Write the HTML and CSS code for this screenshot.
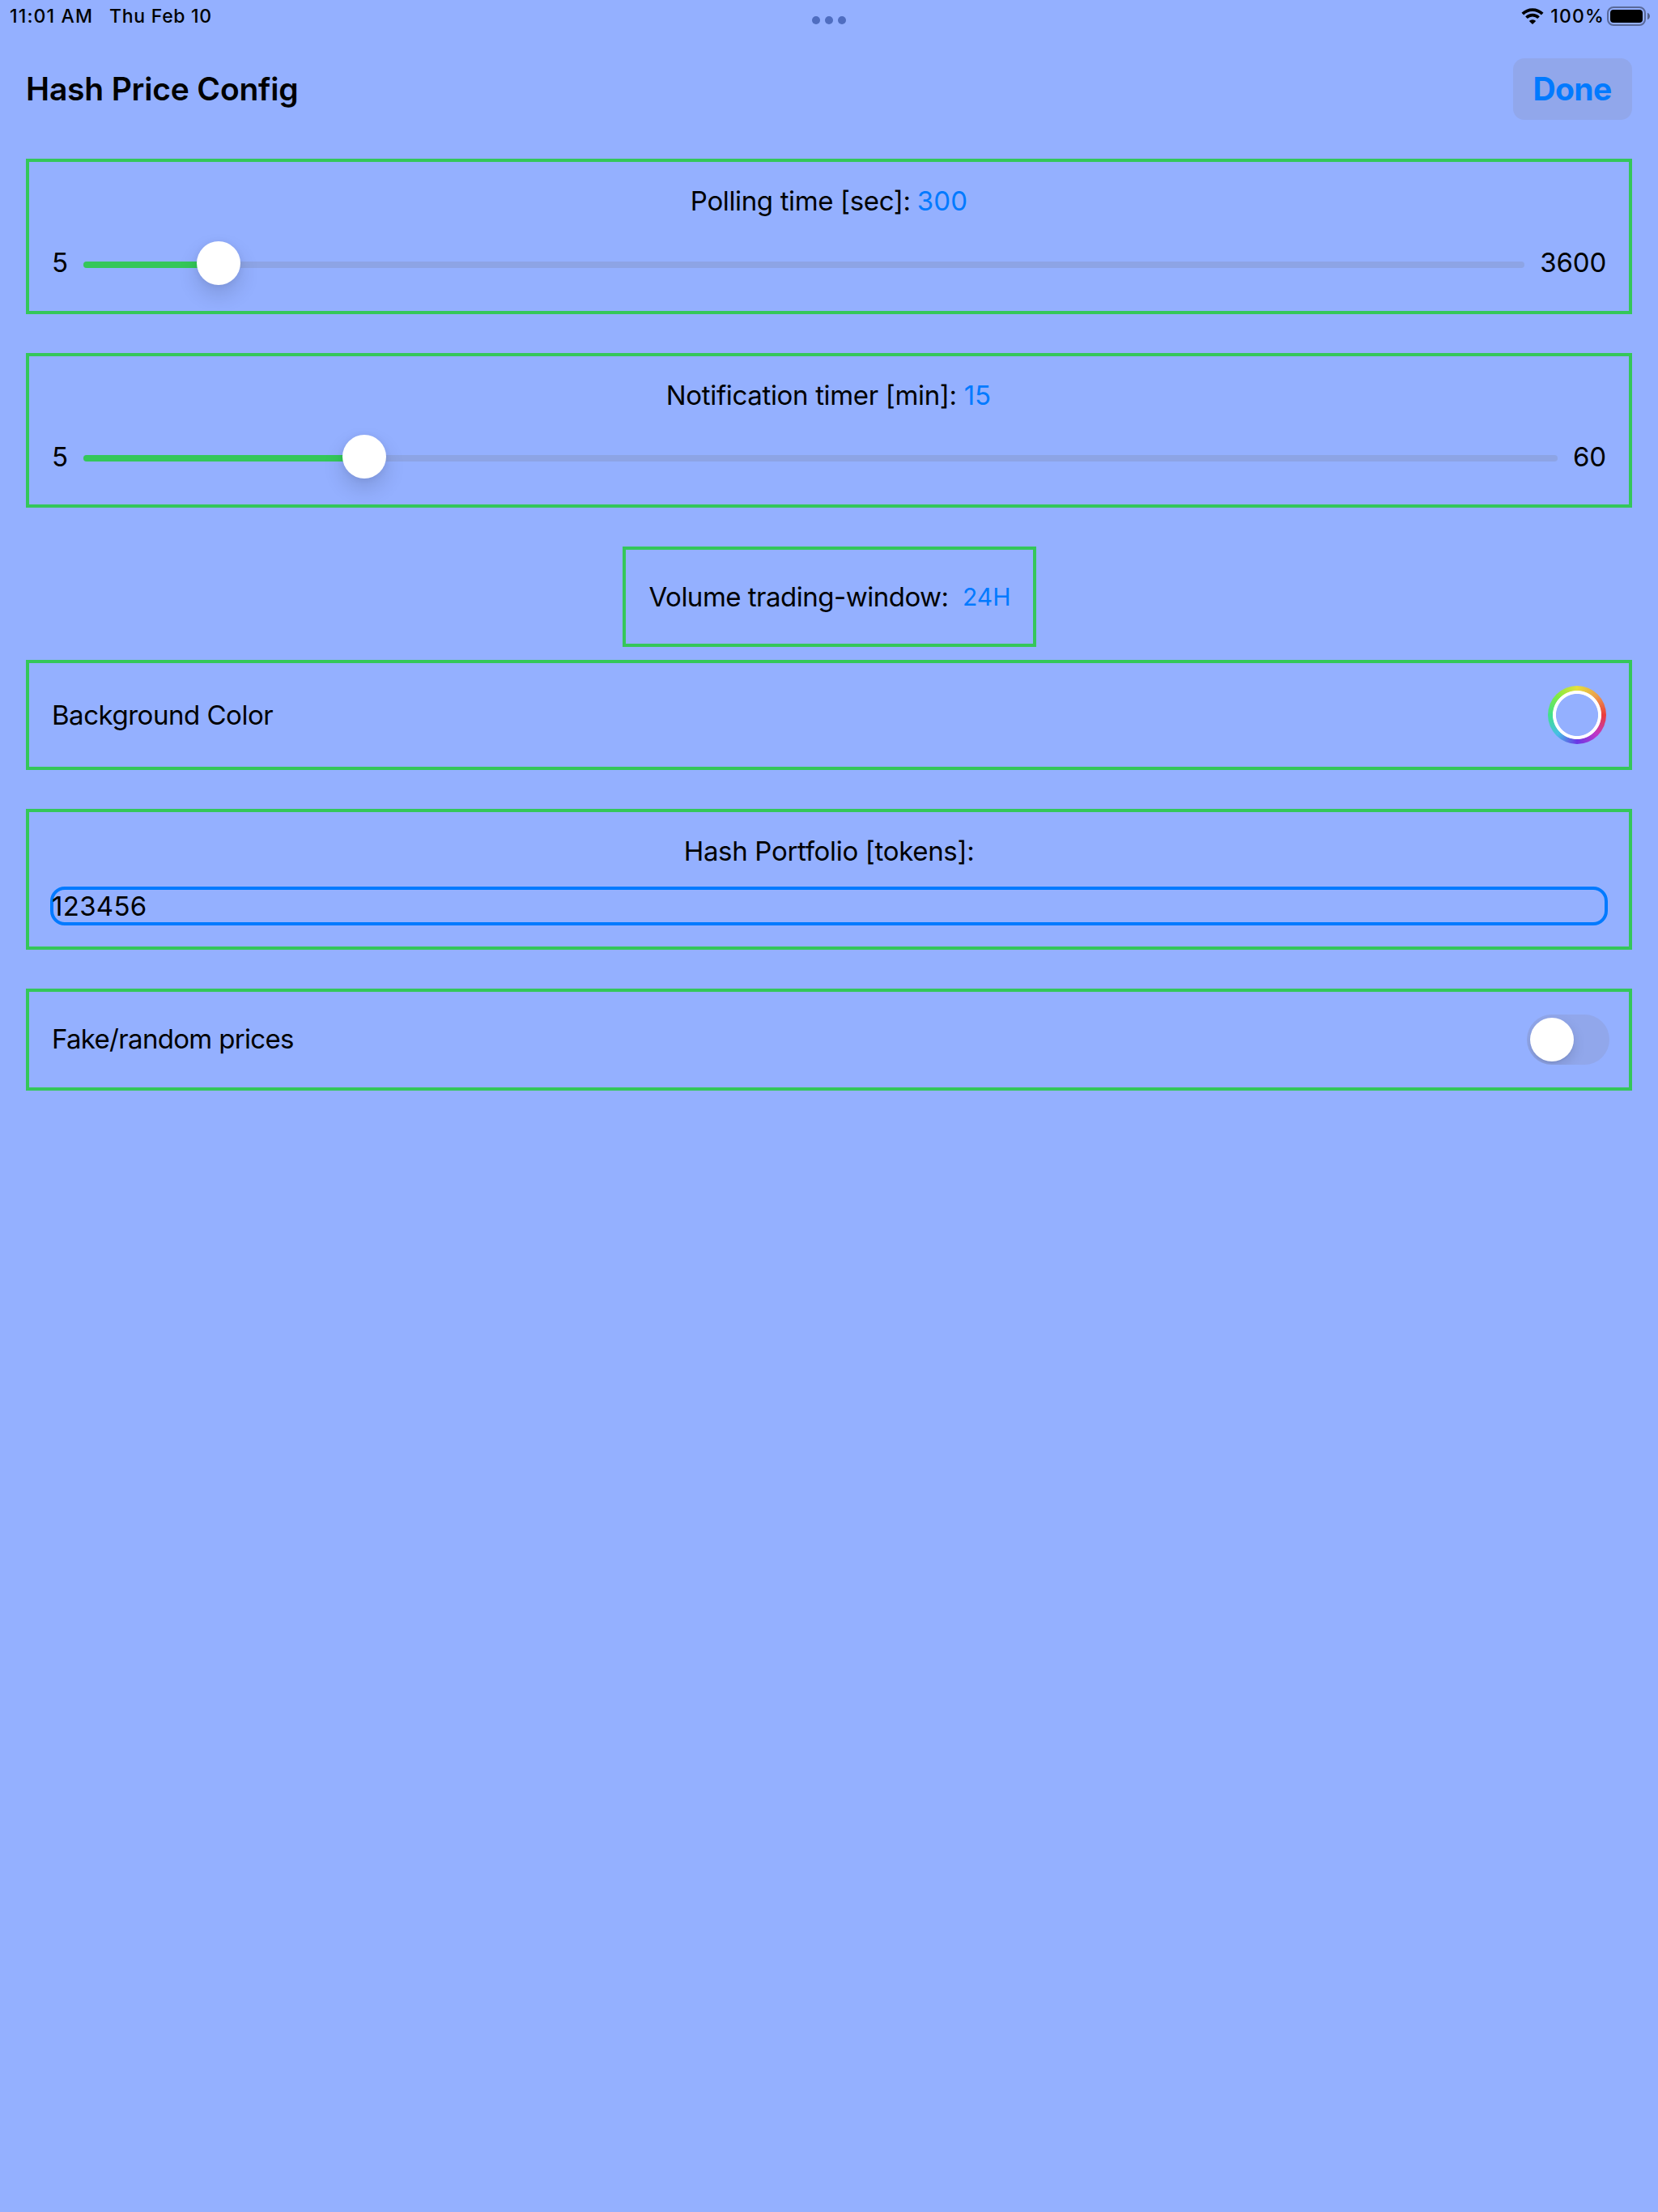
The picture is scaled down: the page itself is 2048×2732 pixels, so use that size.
FILE: index.html
```
<!DOCTYPE html>
<html lang="en">
<head>
<meta charset="utf-8">
<title>Hash Price Config</title>
<link rel="stylesheet" href="styles.css">
</head>
<body>
<div class="statusbar">
  <div class="status-left">
    <span class="time">11:01 AM</span>
    <span class="date">Thu Feb 10</span>
  </div>
  <div class="multitask"><i></i><i></i><i></i></div>
  <div class="status-right">
    <svg class="wifi" viewBox="0 0 28 20" width="28" height="20">
      <path d="M1.8 7.1A17.25 17.25 0 0 1 26.2 7.1" fill="none" stroke="#000" stroke-width="3.8"/>
      <path d="M6.5 11.8A10.6 10.6 0 0 1 21.5 11.8" fill="none" stroke="#000" stroke-width="3.7"/>
      <path d="M14 20L9.8 15.9A6 6 0 0 1 18.2 15.9Z" fill="#000"/>
    </svg>
    <span class="percent">100%</span>
    <svg class="battery" viewBox="0 0 53 24" width="53" height="24">
      <rect x="1" y="1" width="46" height="22" rx="7" fill="none" stroke="#000" stroke-opacity=".4" stroke-width="2"/>
      <rect x="4" y="4" width="40" height="16" rx="4" fill="#000"/>
      <path d="M50 7.8C52 8.6 53 10.2 53 12S52 15.4 50 16.2Z" fill="#000" fill-opacity=".45"/>
    </svg>
  </div>
</div>

<header class="header">
  <h1 class="title">Hash Price Config</h1>
  <button class="done" type="button">Done</button>
</header>

<main class="settings">
  <section class="card polling">
    <div class="caption"><span class="label">Polling time [sec]:</span><span class="value">300</span></div>
    <div class="slider-row">
      <span>5</span>
      <div class="slider"><div class="track"></div><div class="fill" style="width:167px"></div><div class="knob" style="left:140px"></div></div>
      <span class="max">3600</span>
    </div>
  </section>

  <section class="card notify">
    <div class="caption"><span class="label">Notification timer [min]:</span><span class="value">15</span></div>
    <div class="slider-row">
      <span>5</span>
      <div class="slider"><div class="track"></div><div class="fill" style="width:347px"></div><div class="knob" style="left:320px"></div></div>
      <span class="max">60</span>
    </div>
  </section>

  <section class="card window">
    <span class="label">Volume trading-window:</span><span class="picker">24H</span>
  </section>

  <section class="card background">
    <span class="label">Background Color</span>
    <div class="colorwell"></div>
  </section>

  <section class="card portfolio">
    <div class="caption"><span class="label">Hash Portfolio [tokens]:</span></div>
    <div class="field"><span>123456</span></div>
  </section>

  <section class="card fake">
    <span class="label">Fake/random prices</span>
    <div class="switch"><div class="switch-knob"></div></div>
  </section>
</main>
</body>
</html>
```
FILE: styles.css
```
* { box-sizing: border-box; }

body {
  margin: 0;
  min-height: 2732px;
  background: #94b0ff;
  color: #000;
  font: 400 33px/40px Inter, "Liberation Sans", sans-serif;
  white-space: nowrap;
}

/* status bar */
.statusbar {
  display: grid;
  grid-template-columns: 1fr auto 1fr;
  height: 72px;
  padding: 0 10px 0 12px;
  font-size: 23px;
  font-weight: 500;
  line-height: 41px;
}
.status-left { display: flex; gap: 20px; }
.time { letter-spacing: 1.15px; }
.date { letter-spacing: .7px; }
.multitask { display: flex; gap: 6px; padding: 20px 2px 0 0; }
.multitask i { width: 10px; height: 10px; border-radius: 50%; background: #4f6dc0; }
.status-right { display: flex; justify-content: flex-end; align-items: flex-start; }
.wifi { margin: 10px 8px 0 0; }
.percent { letter-spacing: 1.15px; margin-right: 3px; }
.battery { margin-top: 8px; }

/* header */
.header {
  display: flex;
  justify-content: space-between;
  align-items: center;
  height: 76px;
  padding: 0 32px;
}
.title { margin: 0; font-size: 39px; font-weight: 600; letter-spacing: -.19px; }
.done {
  width: 147px;
  height: 76px;
  padding: 0 1px 0 0;
  border: 0;
  border-radius: 14px;
  background: #91a7eb;
  color: #007aff;
  font: 700 39px/40px Inter, "Liberation Sans", sans-serif;
  letter-spacing: -.62px;
}

/* cards */
.settings { display: flex; flex-direction: column; padding: 48px 32px 0; }
.card { border: 4px solid #34c759; padding: 28px; margin-bottom: 48px; }
.caption { display: flex; justify-content: center; }
.value { color: #007aff; }

.polling { height: 192px; }
.polling .label { letter-spacing: -.36px; }
.polling .caption { gap: 8px; }
.polling .value { letter-spacing: .15px; }
.polling .slider { top: 1px; }
.notify { height: 191px; }
.notify .label { letter-spacing: -.34px; }
.notify .caption { gap: 9px; padding-right: 1px; }

.slider-row { display: flex; align-items: center; gap: 19px; height: 54px; margin-top: 29px; }
.slider { position: relative; flex: 1; height: 54px; }
.max { letter-spacing: -.2px; }
.track, .fill { position: absolute; left: 0; top: 25px; height: 8px; border-radius: 4px; }
.track { width: 100%; background: #8da4e5; }
.fill { background: #34c759; }
.knob {
  position: absolute;
  top: 0;
  width: 54px;
  height: 54px;
  border-radius: 50%;
  background: #fff;
  box-shadow: 0 12px 26px rgba(0, 0, 0, .14), 0 1px 8px rgba(0, 0, 0, .06);
}

.window {
  display: flex;
  justify-content: space-between;
  align-items: center;
  align-self: center;
  width: 511px;
  height: 124px;
  margin-bottom: 16px;
  padding: 28px 27px 28px 29px;
}
.window .label { letter-spacing: -.5px; }
.picker { color: #007aff; font-size: 30px; }

.background { display: flex; justify-content: space-between; align-items: center; height: 136px; }
.background .label { letter-spacing: -.48px; }
.colorwell {
  width: 72px;
  height: 72px;
  border-radius: 50%;
  background:
    radial-gradient(circle, #94b0ff 25.6px, #fff 26.4px, #fff 29.6px, transparent 30.4px),
    conic-gradient(#e6e03c, #eba04b 45deg, #eb3c3c 90deg, #be37c8 135deg, #6937e6 180deg, #46bee6 225deg, #41e18c 270deg, #82eb41 315deg, #e6e03c);
}

.portfolio { height: 174px; }
.portfolio .label { letter-spacing: -.32px; }
.field {
  display: flex;
  align-items: center;
  height: 48px;
  margin: 24px -2px 0;
  border: 4px solid #007aff;
  border-radius: 18px;
}
.field span { margin-left: -2px; letter-spacing: .3px; }

.fake { display: flex; justify-content: space-between; align-items: center; height: 126px; }
.fake .label { letter-spacing: -.68px; padding-bottom: 2px; }
.switch {
  width: 102px;
  height: 62px;
  margin-right: -4px;
  padding: 4px;
  border-radius: 31px;
  background: #91a7eb;
  overflow: hidden;
}
.switch-knob {
  width: 54px;
  height: 54px;
  border-radius: 50%;
  background: #fff;
  box-shadow: 0 6px 16px rgba(0, 0, 0, .13), 0 2px 2px rgba(0, 0, 0, .05);
}
```
